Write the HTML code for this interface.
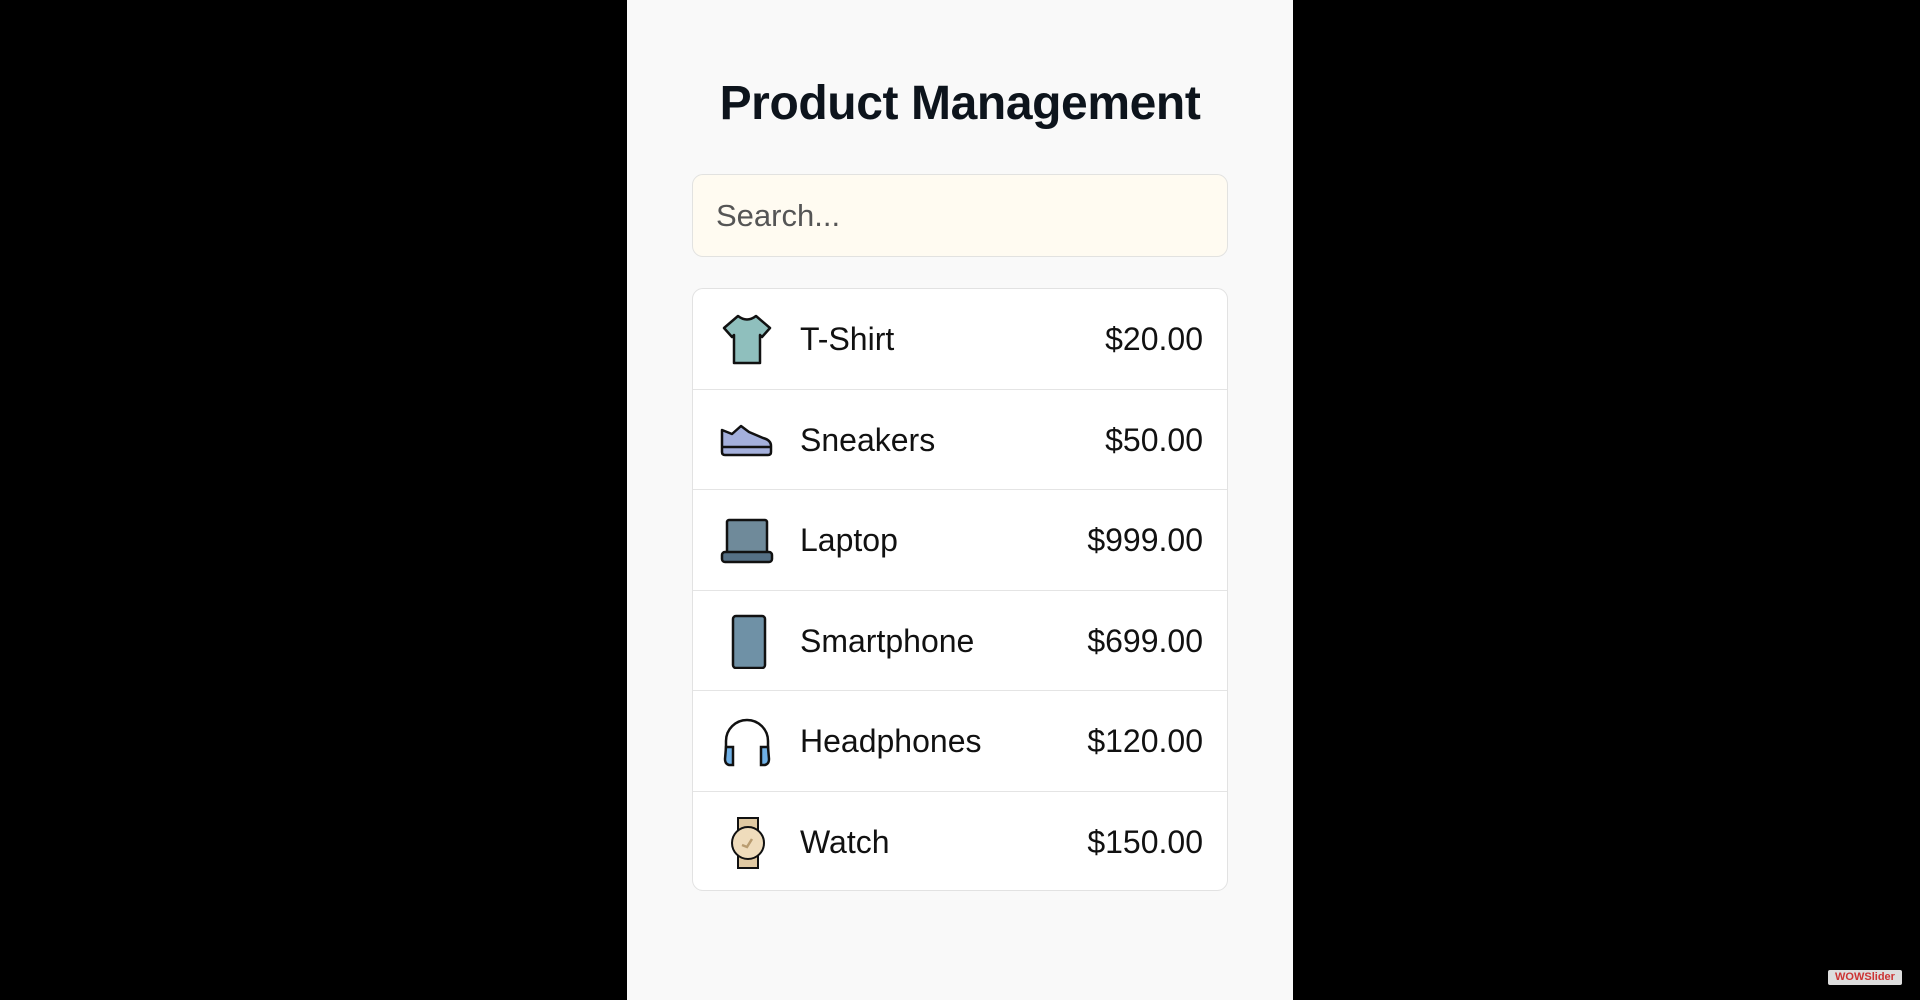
<!DOCTYPE html>
<html><head><meta charset="utf-8"><style>
*{margin:0;padding:0;box-sizing:border-box}
body{width:1920px;height:1000px;background:#000;position:relative;overflow:hidden;font-family:"Liberation Sans",sans-serif}
.panel{position:absolute;left:627px;top:0;width:666px;height:1000px;background:#f9f9f9}
h1{position:absolute;left:0;width:666px;top:76px;text-align:center;font-size:48px;font-weight:bold;color:#0d141c;letter-spacing:-0.4px}
.search{position:absolute;left:65px;top:174px;width:536px;height:83px;border:1px solid #e2e2e0;border-radius:11px;background:#fffbf1;font-size:31px;color:#555;padding-left:23px;line-height:81px}
.list{position:absolute;left:65px;top:288px;width:536px;height:603px;border:1px solid #e2e2e2;border-radius:11px;background:#fff;overflow:hidden}
.row{height:100.5px;border-bottom:1px solid #e4e4e4;position:relative;font-size:32px;color:#111}
.row:last-child{border-bottom:none}
.row svg{position:absolute;left:26px;top:22px}
.name{position:absolute;left:107px;top:0;line-height:100px}
.price{position:absolute;right:24px;top:0;line-height:100px}
.wm{position:absolute;left:1828px;top:970px;width:74px;height:15px;background:#ddd;border-radius:2px;font-size:11px;line-height:15px;text-align:center;color:#c33;font-weight:bold}
</style></head><body>
<div class="panel">
<h1>Product Management</h1>
<div class="search">Search...</div>
<div class="list">
<div class="row"><svg width="56" height="56" viewBox="0 0 56 56"><path d="M19 5 Q28 12 37 5 L51 17 L43 26 L41 24 L41 52 L15 52 L15 24 L13 26 L5 17 Z" fill="#8fbfbd" stroke="#111" stroke-width="2.5" stroke-linejoin="round"/></svg><span class="name">T-Shirt</span><span class="price">$20.00</span></div>
<div class="row"><svg width="56" height="56" viewBox="0 0 56 56"><path d="M3 18 L13 22 L22 14 L30 20 L44 26 Q52 28 52 34 L52 40 Q52 43 49 43 L6 43 Q3 43 3 40 Z" fill="#a4b0dc" stroke="#111" stroke-width="2.5" stroke-linejoin="round"/><path d="M3 35 L52 35" stroke="#111" stroke-width="2.5"/></svg><span class="name">Sneakers</span><span class="price">$50.00</span></div>
<div class="row"><svg width="56" height="56" viewBox="0 0 56 56"><rect x="8" y="8" width="40" height="34" rx="2" fill="#6f8a9a" stroke="#111" stroke-width="2.5"/><rect x="3" y="40" width="50" height="10" rx="3" fill="#557085" stroke="#111" stroke-width="2.5"/></svg><span class="name">Laptop</span><span class="price">$999.00</span></div>
<div class="row"><svg width="56" height="56" viewBox="0 0 56 56"><rect x="14" y="3" width="32" height="52" rx="3" fill="#6f91a6" stroke="#111" stroke-width="2.5"/></svg><span class="name">Smartphone</span><span class="price">$699.00</span></div>
<div class="row"><svg width="56" height="56" viewBox="0 0 56 56"><path d="M7 44 L7 28 A21 21 0 0 1 49 28 L49 44" fill="none" stroke="#111" stroke-width="2.5"/><path d="M7 34 L14 34 L14 52 L10 52 Q6 51 6 46 Z" fill="#6fb0e6" stroke="#111" stroke-width="2.5"/><path d="M49 34 L42 34 L42 52 L46 52 Q50 51 50 46 Z" fill="#6fb0e6" stroke="#111" stroke-width="2.5"/></svg><span class="name">Headphones</span><span class="price">$120.00</span></div>
<div class="row"><svg width="56" height="56" viewBox="0 0 56 56"><rect x="19" y="4" width="20" height="50" fill="#e0c9a2" stroke="#111" stroke-width="2"/><circle cx="29" cy="29" r="16" fill="#efdcbc" stroke="#111" stroke-width="2"/><path d="M23 31 L28 33 L33 25" fill="none" stroke="#b99c70" stroke-width="2.5"/></svg><span class="name">Watch</span><span class="price">$150.00</span></div>
</div>
</div>
<div class="wm">WOWSlider</div>
</body></html>
